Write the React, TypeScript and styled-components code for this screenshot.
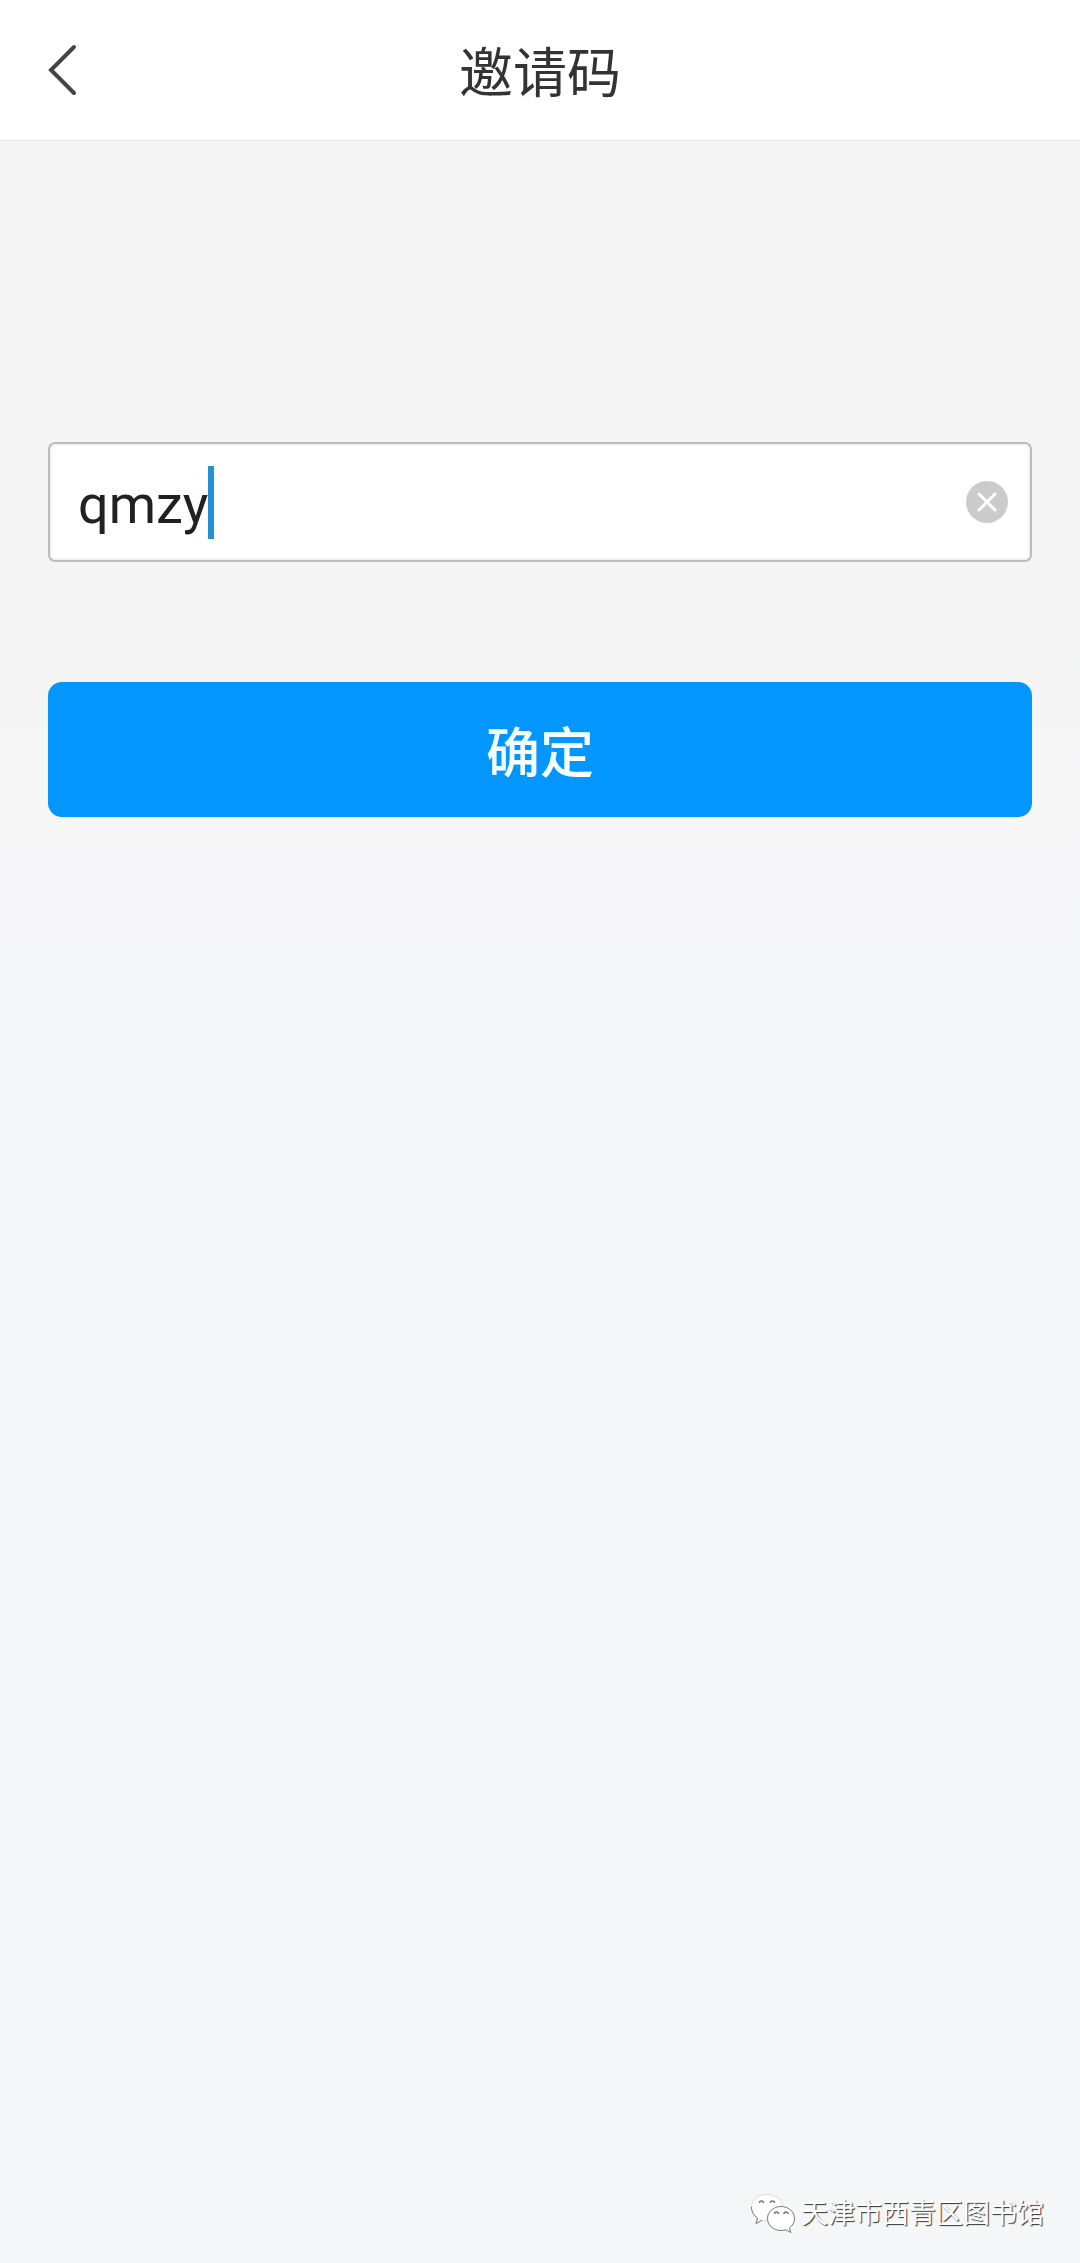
import { useRef, useState } from 'react';
import styled, { createGlobalStyle } from 'styled-components';

const GlobalStyle = createGlobalStyle`
  *, *::before, *::after { box-sizing: border-box; }
  body {
    margin: 0;
    background: #f5f5f5;
    font-family: Roboto, 'Noto Sans CJK SC', sans-serif;
  }
  button, input { font: inherit; border: 0; padding: 0; margin: 0; background: none; }
  button { cursor: pointer; }
`;

const Page = styled.div`
  min-height: 100vh;
  display: flex;
  flex-direction: column;
  background: linear-gradient(#f5f5f5 0, #f5f5f5 600px, #f5f6f8 1000px);
`;

const Header = styled.header`
  display: grid;
  grid-template-columns: 1fr auto 1fr;
  align-items: center;
  height: 141px;
  padding: 0 48px;
  background: #fff;
  border-bottom: 1px solid #e6e6e6;
`;

const BackButton = styled.button`
  justify-self: start;
  display: flex;
  height: 52px;
`;

const Title = styled.h1`
  margin: 0;
  padding-top: 10px;
  font-size: 54px;
  line-height: 80px;
  font-weight: 400;
  color: #333;
`;

const Form = styled.form`
  display: flex;
  flex-direction: column;
  gap: 120px;
  padding: 301px 48px 0;
`;

const Field = styled.label`
  display: flex;
  align-items: center;
  height: 120px;
  padding: 0 22px 0 28px;
  background: #fff;
  border: 2px solid #bcbcbc;
  border-radius: 7px;
  box-shadow: inset 0 0 3px #d4d4d4;
  cursor: text;
`;

const CodeInput = styled.input`
  field-sizing: content;
  min-width: 2px;
  max-width: 80%;
  height: 72px;
  padding-top: 4px;
  font-size: 54px;
  line-height: 68px;
  color: #212121;
  outline: none;
  caret-color: transparent;
`;

const Caret = styled.span`
  width: 6px;
  height: 73px;
  background: #2391d6;
`;

const ClearButton = styled.button`
  display: flex;
  margin-left: auto;
`;

const SubmitButton = styled.button`
  height: 135px;
  border-radius: 14px;
  background: #0396ff;
  color: #f4ffff;
  font-size: 54px;
  line-height: 80px;
  font-weight: 500;
  padding-top: 10px;
`;

const Watermark = styled.footer`
  display: flex;
  justify-content: flex-end;
  align-items: center;
  gap: 5px;
  margin-top: auto;
  padding: 0 36px 29px;
  font-size: 27px;
  line-height: 40px;
  color: #fff;
  text-shadow: 1px 1px 1px #333;
`;

const BackIcon = () => (
  <svg width="30" height="52" viewBox="0 0 30 52" fill="none" stroke="#444" strokeWidth="4" strokeLinecap="round" aria-hidden="true">
    <path d="M26 3 3 26l23 23" />
  </svg>
);

const ClearIcon = () => (
  <svg width="42" height="42" viewBox="0 0 42 42" aria-hidden="true">
    <circle cx="21" cy="21" r="21" fill="#cbcbcb" />
    <path d="m13 13 16 16M29 13 13 29" stroke="#fff" strokeWidth="3" strokeLinecap="round" />
  </svg>
);

const ChatIcon = () => (
  <svg width="46" height="40" viewBox="0 0 46 40" fill="#fff" stroke="#777" strokeWidth="1" strokeLinejoin="round" aria-hidden="true">
    <path d="M17 .5C8 .5 1.500 6 1.500 13.500c0 4.500 2.300 8 6 10.500L6 29.500l6-3.300c1.600.4 3.200.6 5 .6 9 0 16-6 16-13.300S26 .5 17 .5Z" stroke="#dcdcdc" />
    <path d="M1.500 13c0 4.500 2.300 8.500 6 11L6 29.500l6-3.300" fill="none" />
    <path d="M31 12.500c-7.500 0-13.500 5.300-13.500 12S23.500 36.500 31 36.500c1.700 0 3.300-.2 4.800-.7l5 2.700-1.400-4.500c3.100-2.200 5.100-5.600 5.100-9.500 0-6.700-6-12-13.500-12Z" />
    <path d="M9.500 9a2 2 0 0 1 4 0M20.500 9a2 2 0 0 1 4 0M24.500 20a2 2 0 0 1 4 0M34 20a2 2 0 0 1 4 0" fill="none" strokeWidth="1.500" />
  </svg>
);

export default function App() {
  const [code, setCode] = useState('qmzy');
  const inputRef = useRef<HTMLInputElement>(null);

  const clear = () => {
    setCode('');
    inputRef.current?.focus();
  };

  return (
    <>
      <GlobalStyle />
      <Page>
        <Header>
          <BackButton type="button" aria-label="返回">
            <BackIcon />
          </BackButton>
          <Title>邀请码</Title>
        </Header>
        <Form onSubmit={(e) => e.preventDefault()}>
          <Field htmlFor="invite-code">
            <CodeInput
              id="invite-code"
              ref={inputRef}
              type="text"
              aria-label="邀请码"
              autoComplete="off"
              spellCheck={false}
              value={code}
              onChange={(e) => setCode(e.target.value)}
            />
            <Caret />
            <ClearButton type="button" aria-label="清除" onClick={clear}>
              <ClearIcon />
            </ClearButton>
          </Field>
          <SubmitButton type="submit">确定</SubmitButton>
        </Form>
        <Watermark>
          <ChatIcon />
          <span>天津市西青区图书馆</span>
        </Watermark>
      </Page>
    </>
  );
}
